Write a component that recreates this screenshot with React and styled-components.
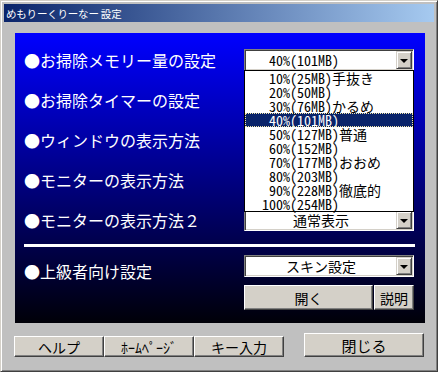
import React from 'react';
import styled, { createGlobalStyle } from 'styled-components';

const GlobalStyle = createGlobalStyle`
  html, body {
    margin: 0;
    padding: 0;
    background: #c0c0c0;
  }
  body {
    font-family: "Noto Sans Mono CJK JP", "Noto Sans CJK JP", sans-serif;
  }
`;

const Window = styled.div`
  width: 438px;
  height: 372px;
  box-sizing: border-box;
  background: #c0c0c0;
  border: 1px solid;
  border-color: #d4d0c8 #404040 #404040 #d4d0c8;
  box-shadow: inset 1px 1px 0 #fff, inset -1px -1px 0 #808080;
  padding: 3px;
  display: flex;
  flex-direction: column;
`;

const TitleBar = styled.div`
  height: 18px;
  flex: none;
  display: flex;
  align-items: center;
  padding-left: 2px;
  background: linear-gradient(to right, #0a246a, #a6caf0);
  color: #fff;
  font-family: "Noto Sans CJK JP", sans-serif;
  font-size: 10.5px;
  letter-spacing: -0.2px;
`;

const Body = styled.div`
  padding: 11px 0 0 11px;
`;

const Panel = styled.div`
  width: 410px;
  height: 290px;
  box-sizing: border-box;
  padding: 7px 10px 13px 9px;
  background: linear-gradient(to bottom, #0000ff, #000008);
`;

const Row = styled.div`
  display: grid;
  grid-template-columns: 220px 170px;
  height: 40px;
  align-items: center;
`;

const Label = styled.div`
  color: #fff;
  font-family: "Noto Sans CJK JP", sans-serif;
  font-size: 16px;
  line-height: 16px;
  white-space: nowrap;
  margin-top: ${p => p.$top || 0}px;
  align-self: ${p => (p.$top ? 'start' : 'center')};
`;

const Separator = styled.div`
  height: 3px;
  background: #fff;
  margin: 4px 0 8px;
`;

const Advanced = styled.div`
  display: grid;
  grid-template-columns: 220px 170px;
`;

const ControlColumn = styled.div`
  display: flex;
  flex-direction: column;
  gap: 8px;
`;

const ButtonRow = styled.div`
  display: flex;
  gap: 1px;
`;

const Combo = styled.div`
  position: relative;
  width: 170px;
  height: 22px;
  box-sizing: border-box;
  border: 1px solid;
  border-color: #808080 #fff #fff #808080;
  box-shadow: inset 1px 1px 0 #404040, inset -1px -1px 0 #d4d0c8;
  padding: 1px;
  background: #fff;
  display: flex;
`;

const ComboText = styled.div`
  flex: 1;
  font-size: 14px;
  line-height: 18px;
  color: #000;
  white-space: nowrap;
  padding-left: ${p => (p.$center ? 0 : 23)}px;
  text-align: ${p => (p.$center ? 'center' : 'left')};
`;

const ArrowButton = styled.div`
  width: 16px;
  height: 18px;
  box-sizing: border-box;
  background: #d4d0c8;
  border: 1px solid;
  border-color: #d4d0c8 #404040 #404040 #d4d0c8;
  box-shadow: inset 1px 1px 0 #fff, inset -1px -1px 0 #808080;
  display: flex;
  align-items: center;
  justify-content: center;

  &::after {
    content: '';
    width: 0;
    height: 0;
    border-left: 4px solid transparent;
    border-right: 4px solid transparent;
    border-top: 4px solid #000;
    margin-top: 1px;
  }
`;

const List = styled.div`
  position: absolute;
  top: 100%;
  left: -1px;
  width: 170px;
  box-sizing: border-box;
  border: 1px solid #000;
  background: #fff;
  z-index: 10;
`;

const Item = styled.div`
  height: 14px;
  font-size: 14px;
  line-height: 14px;
  white-space: nowrap;
  padding-left: ${p => (p.$wide ? 17 : 24)}px;
  color: ${p => (p.$selected ? '#fff' : '#000')};
  background: ${p => (p.$selected ? '#0a246a' : 'transparent')};
  outline: ${p => (p.$selected ? '1px dotted #f2e6a8' : 'none')};
  outline-offset: -1px;
`;

const Button = styled.button`
  width: ${p => p.$w}px;
  height: ${p => p.$h}px;
  box-sizing: border-box;
  padding: 0;
  margin: 0;
  background: #d4d0c8;
  border: 1px solid;
  border-color: #fff #404040 #404040 #fff;
  box-shadow: inset -1px -1px 0 #808080, inset 1px 1px 0 #d4d0c8;
  font-family: "Noto Sans Mono CJK JP", "Noto Sans CJK JP", sans-serif;
  font-size: 14px;
  line-height: 1;
  color: #000;
  text-align: center;
`;

const Footer = styled.div`
  display: flex;
  align-items: flex-end;
  margin: 10px 0 0 -1px;
`;

const ButtonGroup = styled.div`
  display: flex;
`;

const CloseButton = styled(Button)`
  margin-left: 20px;
  font-size: 15px;
`;

const memoryOptions = [
  '10%(25MB)手抜き',
  '20%(50MB)',
  '30%(76MB)かるめ',
  '40%(101MB)',
  '50%(127MB)普通',
  '60%(152MB)',
  '70%(177MB)おおめ',
  '80%(203MB)',
  '90%(228MB)徹底的',
  '100%(254MB)',
];

// combos under the open list: their values are not visible, so they stay empty
const DropCombo = ({ value, center, children }) => (
  <Combo>
    <ComboText $center={center}>{value}</ComboText>
    <ArrowButton />
    {children}
  </Combo>
);

export default function App() {
  return (
    <>
      <GlobalStyle />
      <Window>
        <TitleBar>めもりーくりーなー 設定</TitleBar>
        <Body>
          <Panel>
            <Row>
              <Label>●お掃除メモリー量の設定</Label>
              <DropCombo value="40%(101MB)">
                <List>
                  {memoryOptions.map(opt => (
                    <Item
                      key={opt}
                      $wide={opt.startsWith('100')}
                      $selected={opt === '40%(101MB)'}
                    >
                      {opt}
                    </Item>
                  ))}
                </List>
              </DropCombo>
            </Row>
            <Row>
              <Label>●お掃除タイマーの設定</Label>
              <DropCombo center />
            </Row>
            <Row>
              <Label>●ウィンドウの表示方法</Label>
              <DropCombo center />
            </Row>
            <Row>
              <Label>●モニターの表示方法</Label>
              <DropCombo center />
            </Row>
            <Row>
              <Label>●モニターの表示方法２</Label>
              <DropCombo value="通常表示" center />
            </Row>
            <Separator />
            <Advanced>
              <Label $top={8}>●上級者向け設定</Label>
              <ControlColumn>
                <DropCombo value="スキン設定" center />
                <ButtonRow>
                  <Button $w={129} $h={25}>開く</Button>
                  <Button $w={40} $h={25}>説明</Button>
                </ButtonRow>
              </ControlColumn>
            </Advanced>
          </Panel>
          <Footer>
            <ButtonGroup>
              <Button $w={90} $h={21}>ヘルプ</Button>
              <Button $w={90} $h={21}>ﾎｰﾑﾍﾟｰｼﾞ</Button>
              <Button $w={90} $h={21}>キー入力</Button>
            </ButtonGroup>
            <CloseButton $w={120} $h={24}>閉じる</CloseButton>
          </Footer>
        </Body>
      </Window>
    </>
  );
}
